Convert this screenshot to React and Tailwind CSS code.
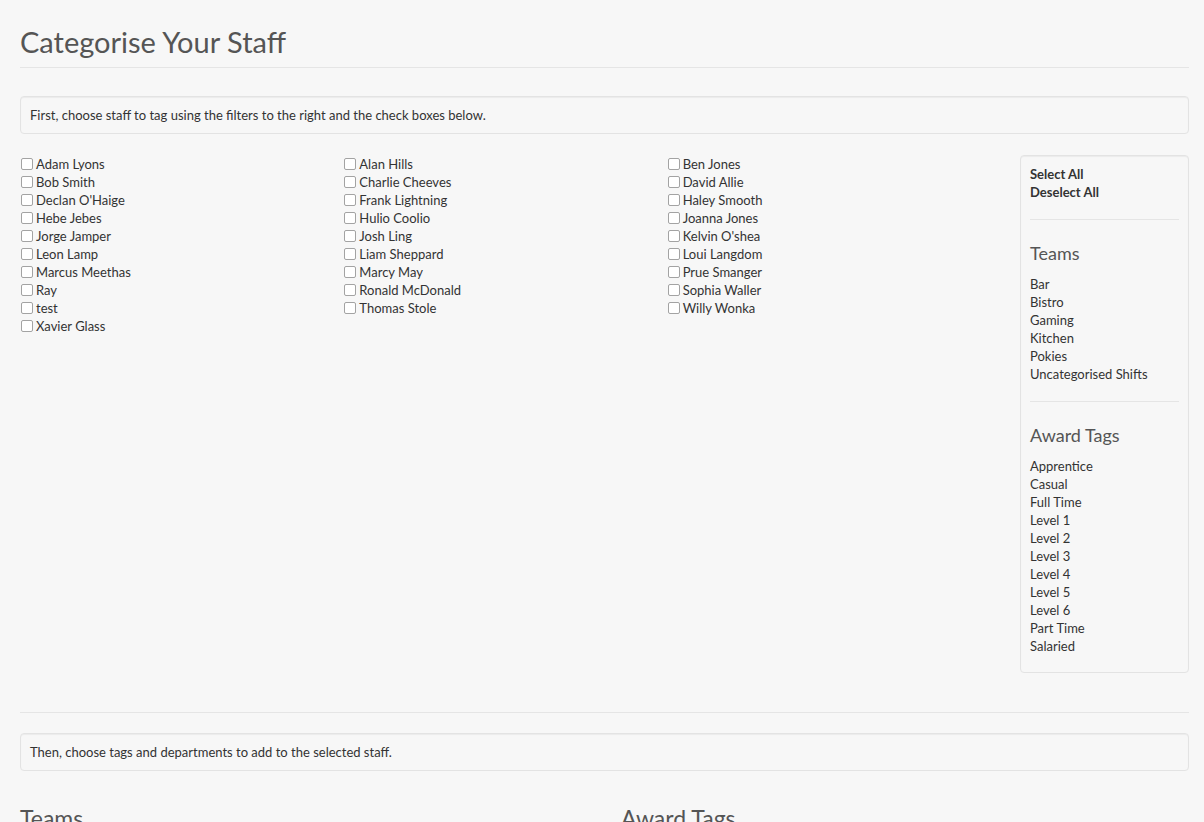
import React from "react";

const columns = [
  ["Adam Lyons", "Bob Smith", "Declan O'Haige", "Hebe Jebes", "Jorge Jamper", "Leon Lamp", "Marcus Meethas", "Ray", "test", "Xavier Glass"],
  ["Alan Hills", "Charlie Cheeves", "Frank Lightning", "Hulio Coolio", "Josh Ling", "Liam Sheppard", "Marcy May", "Ronald McDonald", "Thomas Stole"],
  ["Ben Jones", "David Allie", "Haley Smooth", "Joanna Jones", "Kelvin O'shea", "Loui Langdom", "Prue Smanger", "Sophia Waller", "Willy Wonka"],
];

const teams = ["Bar", "Bistro", "Gaming", "Kitchen", "Pokies", "Uncategorised Shifts"];
const awardTags = ["Apprentice", "Casual", "Full Time", "Level 1", "Level 2", "Level 3", "Level 4", "Level 5", "Level 6", "Part Time", "Salaried"];

const StaffCheck = ({ name }) => (
  <label className="flex items-center h-[18px] cursor-pointer">
    <input
      type="checkbox"
      className="appearance-none w-[12px] h-[12px] ml-[1px] mr-[3px] border border-[#a3a3a3] rounded-[2px] bg-white checked:bg-[#3b82f6] shrink-0"
    />
    <span>{name}</span>
  </label>
);

const Well = ({ children, className = "" }) => (
  <div className={`border border-[#e3e3e3] rounded-[4px] bg-[#f7f7f7] shadow-[inset_0_1px_1px_rgba(0,0,0,0.05)] ${className}`}>
    {children}
  </div>
);

export default function App() {
  return (
    <div
      className="min-h-screen bg-[#f7f7f7] text-[#333] text-[13px] leading-[18px] pl-[20px] pr-[15px] pt-[25px]"
      style={{ fontFamily: "Lato, 'Open Sans', sans-serif" }}
    >
      <h1 className="text-[29px] leading-[33px] text-[#555] font-normal">Categorise Your Staff</h1>
      <hr className="mt-[9px] border-0 border-t border-[#e5e5e5]" />

      <Well className="mt-[28px] px-[9px] py-[9px]">
        First, choose staff to tag using the filters to the right and the check boxes below.
      </Well>

      <div className="flex mt-[21px] gap-[30px]">
        <div className="w-[970px] grid grid-cols-3">
          {columns.map((col, i) => (
            <div key={i}>
              {col.map(name => (
                <StaffCheck key={name} name={name} />
              ))}
            </div>
          ))}
        </div>

        <Well className="w-[169px] px-[9px] pt-[9px] pb-[17px]">
          <div className="font-bold">
            <div className="cursor-pointer">Select All</div>
            <div className="cursor-pointer">Deselect All</div>
          </div>
          <hr className="mt-[18px] border-0 border-t border-[#e5e5e5]" />
          <h4 className="mt-[23px] mb-[12px] text-[18px] leading-[20px] text-[#555]">Teams</h4>
          {teams.map(t => (
            <div key={t} className="cursor-pointer">{t}</div>
          ))}
          <hr className="mt-[18px] border-0 border-t border-[#e5e5e5]" />
          <h4 className="mt-[23px] mb-[12px] text-[18px] leading-[20px] text-[#555]">Award Tags</h4>
          {awardTags.map(t => (
            <div key={t} className="cursor-pointer">{t}</div>
          ))}
        </Well>
      </div>

      <hr className="mt-[39px] border-0 border-t border-[#e5e5e5]" />

      <Well className="mt-[20px] px-[9px] py-[9px]">
        Then, choose tags and departments to add to the selected staff.
      </Well>

      <div className="flex mt-[34px]">
        <div className="w-[601px]">
          <h2 className="text-[23px] leading-[26px] text-[#555]">Teams</h2>
        </div>
        <div>
          <h2 className="text-[23px] leading-[26px] text-[#555]">Award Tags</h2>
        </div>
      </div>
    </div>
  );
}
